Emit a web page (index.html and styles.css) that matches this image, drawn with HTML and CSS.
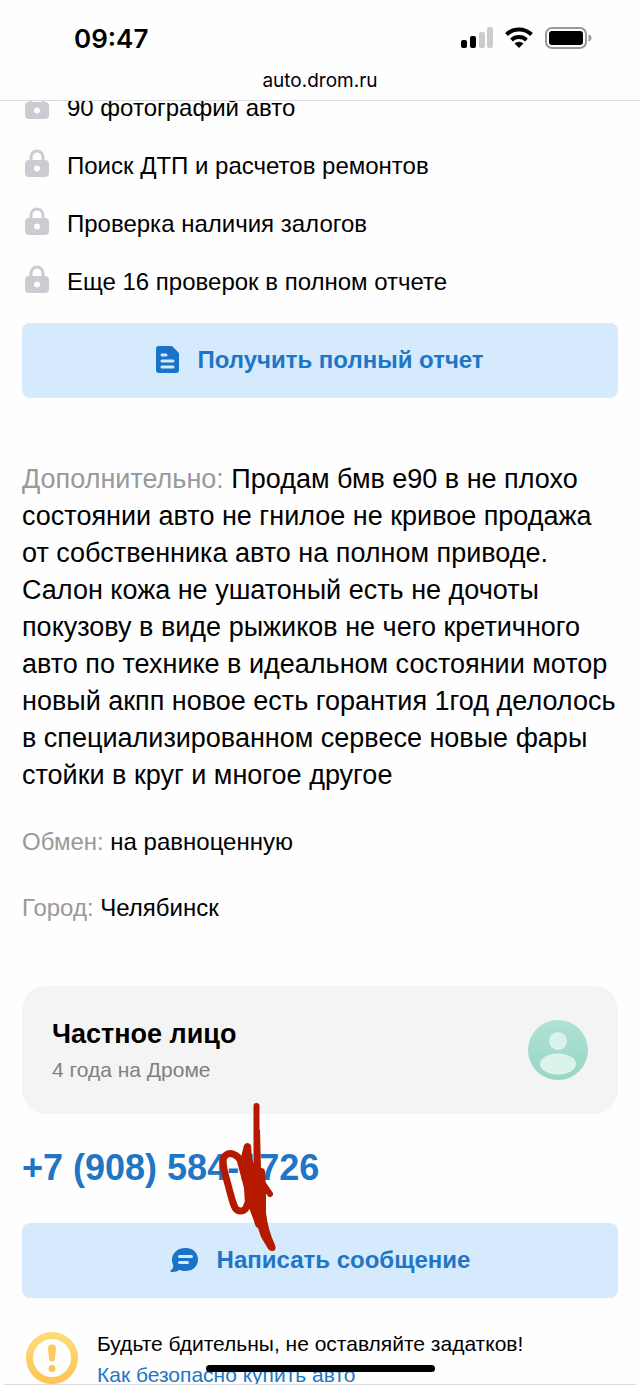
FILE: index.html
```html
<!DOCTYPE html>
<html lang="ru">
<head>
  <meta charset="utf-8">
  <title>auto.drom.ru</title>
  <meta name="viewport" content="width=device-width, initial-scale=1">
  <link rel="stylesheet" href="styles.css">
</head>
<body>

<svg class="sprite" aria-hidden="true">
  <symbol id="lock" viewBox="0 0 24 29">
    <path d="M6 13V8a6 6 0 0 1 12 0v5" fill="none" stroke="#cbccd1" stroke-width="3"/>
    <path fill-rule="evenodd" fill="#cbccd1" d="M4 11h16a4 4 0 0 1 4 4v9a4 4 0 0 1-4 4H4a4 4 0 0 1-4-4v-9a4 4 0 0 1 4-4zm8 5.500a3 3 0 1 0 0 6 3 3 0 0 0 0-6z"/>
  </symbol>
</svg>

<header class="header">
  <div class="status">
    <span class="time">09:47</span>
    <div class="status-icons">
      <svg width="34" height="22" viewBox="0 0 34 22">
        <rect x="2" y="13" width="6" height="8" rx="2"/>
        <rect x="11" y="9" width="6" height="12" rx="2"/>
        <rect x="20" y="5" width="6" height="16" rx="2" fill="#ccc"/>
        <rect x="28" y="0" width="6" height="21" rx="2" fill="#ccc"/>
      </svg>
      <svg width="28" height="22" viewBox="0 0 28 22">
        <path d="M1.500 7.500a18 18 0 0 1 25 0" fill="none" stroke="#000" stroke-width="4"/>
        <path d="M6.500 13a11 11 0 0 1 15 0" fill="none" stroke="#000" stroke-width="4"/>
        <path d="M9.500 16.500a6.500 6.500 0 0 1 9 0L14 21z"/>
      </svg>
      <svg width="47" height="22" viewBox="0 0 47 22">
        <rect x="1" y="1" width="40" height="20" rx="6" fill="none" stroke="#999" stroke-width="2"/>
        <rect x="4" y="4" width="34" height="14" rx="3"/>
        <path d="M43.500 7.500q3 1 3 3.500t-3 3.500z" fill="#999"/>
      </svg>
    </div>
  </div>
  <div class="address">auto.drom.ru</div>
</header>

<main class="page">
  <ul class="checks">
    <li><svg class="lock"><use href="#lock"/></svg>90 фотографий авто</li>
    <li><svg class="lock"><use href="#lock"/></svg>Поиск ДТП и расчетов ремонтов</li>
    <li><svg class="lock"><use href="#lock"/></svg>Проверка наличия залогов</li>
    <li><svg class="lock"><use href="#lock"/></svg>Еще 16 проверок в полном отчете</li>
  </ul>

  <button class="btn" type="button">
    <svg width="23" height="27" viewBox="0 0 23 27">
      <path d="M3 0h12q1 0 2 1l5 5q1 1 1 2v16a3 3 0 0 1-3 3H3a3 3 0 0 1-3-3V3a3 3 0 0 1 3-3z" fill="#1a73c9"/>
      <path d="M6 9h4M6 15h11M6 21h11" stroke="#d5ebfd" stroke-width="3" stroke-linecap="round"/>
    </svg>
    Получить полный отчет
  </button>

  <p class="description"><span class="label">Дополнительно:</span> Продам бмв е90 в не плохо состоянии авто не гнилое не кривое продажа от собственника авто на полном приводе. Салон кожа не ушатоный есть не дочоты покузову в виде рыжиков не чего кретичного авто по технике в идеальном состоянии мотор новый акпп новое есть горантия 1год делолось в специализированном сервесе новые фары стойки в круг и многое другое</p>

  <p class="field"><span class="label">Обмен:</span> на равноценную</p>
  <p class="field"><span class="label">Город:</span> Челябинск</p>

  <section class="seller">
    <div>
      <h2>Частное лицо</h2>
      <p>4 года на Дроме</p>
    </div>
    <svg width="60" height="60" viewBox="0 0 60 60">
      <defs>
        <linearGradient id="mint" x1="0" y1="0" x2="0" y2="1">
          <stop offset="0" stop-color="#b0e1d5"/>
          <stop offset="1" stop-color="#97d6c5"/>
        </linearGradient>
      </defs>
      <circle cx="30" cy="30" r="30" fill="url(#mint)"/>
      <circle cx="30" cy="21" r="9" fill="#daf3ed"/>
      <ellipse cx="30" cy="44" rx="18" ry="10.500" fill="#daf3ed"/>
    </svg>
  </section>

  <div class="phone">
    <a href="tel:+79085841726">+7 (908) 584-1726</a>
    <svg class="scribble" width="64" height="156" viewBox="0 0 64 156">
      <g fill="none" stroke="#b51a00" stroke-width="6" stroke-linecap="round" stroke-linejoin="round">
        <path d="M41.500 6V92"/>
        <path d="M26 61C22 54 15 52 11 55C6 58 8 67 12 81C16 95 18 107 22 110C26 112 31 111 32 105" stroke-width="7"/>
        <path d="M44 78L55 94"/>
      </g>
      <path fill="#b51a00" d="M20 54L26 57L29 45Q32 41 36 45L37 58L39 64V30H45L46 68Q50 68 50 72L51 90V113Q53 130 60 145Q62 151 57 151Q54 151 52 147L46 137L43 128Q40 127 39 121L34 108L30 106L29 88Z"/>
    </svg>
  </div>

  <button class="btn" type="button">
    <svg width="29" height="26" viewBox="0 0 29 26">
      <path d="M15.500 1C23 1 28 5.800 28 12.500S23 24 15.500 24c-2.600 0-4.300-.5-6-1.300C7.500 24.500 4 25.400 1 24.800c-1-.2-.8-1.200 0-1.700 1.600-1 2.300-2.600 2.300-5C2.300 16.500 2 14.500 2 12.500 2 5.800 8 1 15.500 1z" fill="#1a73c9"/>
      <path d="M9.500 9.500h12M9.500 15.500h8" stroke="#d5ebfd" stroke-width="3" stroke-linecap="round"/>
    </svg>
    Написать сообщение
  </button>

  <section class="warning">
    <svg width="54" height="54" viewBox="0 0 54 54">
      <defs>
        <linearGradient id="amber" x1="0" y1="0" x2="0" y2="1">
          <stop offset="0" stop-color="#fddb76"/>
          <stop offset="1" stop-color="#fdc558"/>
        </linearGradient>
      </defs>
      <circle cx="27" cy="27" r="22.500" fill="none" stroke="url(#amber)" stroke-width="7"/>
      <path d="M23 17.500a4 4 0 0 1 8 0l-1 10a3 3 0 0 1-6 0z" fill="#fdca5f"/>
      <circle cx="27" cy="37.500" r="3.500" fill="#fdc558"/>
    </svg>
    <div>
      <p>Будьте бдительны, не оставляйте задатков!</p>
      <a href="#">Как безопасно купить авто</a>
    </div>
  </section>
</main>

<footer class="bottom-bar"><span class="home"></span></footer>

</body>
</html>
```

FILE: styles.css
```css
* {
  box-sizing: border-box;
}

body {
  margin: 0;
  height: 100vh;
  display: flex;
  flex-direction: column;
  overflow: hidden;
  background: #fefefe;
  color: #000;
  font-family: "Liberation Sans", Arial, sans-serif;
  font-size: 24px;
}

p, h2, ul {
  margin: 0;
  padding: 0;
}

a {
  color: #1f75c6;
  text-decoration: none;
}

svg {
  flex: none;
}

.sprite {
  position: absolute;
  width: 0;
  height: 0;
}

.header {
  flex: none;
  border-bottom: 1px solid #dedede;
  padding: 22px 48px 3px 74px;
}

.status {
  display: flex;
  align-items: center;
  justify-content: space-between;
  height: 32px;
}

.time {
  font-family: Inter, sans-serif;
  font-size: 26px;
  font-weight: 600;
}

.status-icons {
  display: flex;
  gap: 12px;
}

.address {
  margin: 11px -48px 0 -74px;
  text-align: center;
  font-family: Inter, sans-serif;
  font-size: 19px;
  line-height: 32px;
}

.page {
  flex: 1;
  min-height: 0;
  overflow: hidden;
  padding: 0 22px;
}

/* list is scrolled part way under the header */
.checks {
  list-style: none;
  margin: -22px 0 12px;
}

.checks li {
  display: flex;
  align-items: center;
  gap: 18px;
  height: 58px;
  padding-left: 3px;
}

.lock {
  width: 24px;
  height: 29px;
  margin-bottom: 6px;
}

.btn {
  display: flex;
  align-items: center;
  justify-content: center;
  gap: 18px;
  width: 100%;
  height: 75px;
  padding: 0 0 2px;
  border: 0;
  border-radius: 8px;
  background: #d5ebfd;
  color: #1f75c6;
  font: bold 24px "Liberation Sans", Arial, sans-serif;
  cursor: pointer;
}

.label {
  color: #999;
}

.description {
  margin: 63px 0 31px;
  font-size: 27px;
  line-height: 37px;
}

.field {
  margin-bottom: 32px;
  line-height: 34px;
}

.seller {
  display: flex;
  align-items: center;
  justify-content: space-between;
  margin-top: 61px;
  padding: 27px 30px;
  border-radius: 24px;
  background: #f4f4f4;
}

.seller h2 {
  padding-top: 2px;
  font-size: 27px;
  line-height: 38px;
}

.seller p {
  color: #808080;
  font-size: 21px;
  line-height: 34px;
}

.phone {
  position: relative;
  padding: 31px 0 32px;
  font-size: 36px;
  font-weight: bold;
  line-height: 46px;
}

/* hand-drawn mark over the number */
.scribble {
  position: absolute;
  left: 193px;
  top: -14px;
  pointer-events: none;
}

.warning {
  display: flex;
  gap: 18px;
  padding: 30px 0 0 3px;
  font-size: 21px;
  line-height: 31px;
}

.warning svg {
  margin-top: 3px;
}

.bottom-bar {
  position: fixed;
  left: 4px;
  right: 4px;
  bottom: 0;
  height: 20px;
  border-bottom: 1px solid #dcdcdc;
}

.home {
  display: block;
  width: 229px;
  height: 7px;
  margin: 0 auto;
  border-radius: 4px;
  background: #000;
}
```
